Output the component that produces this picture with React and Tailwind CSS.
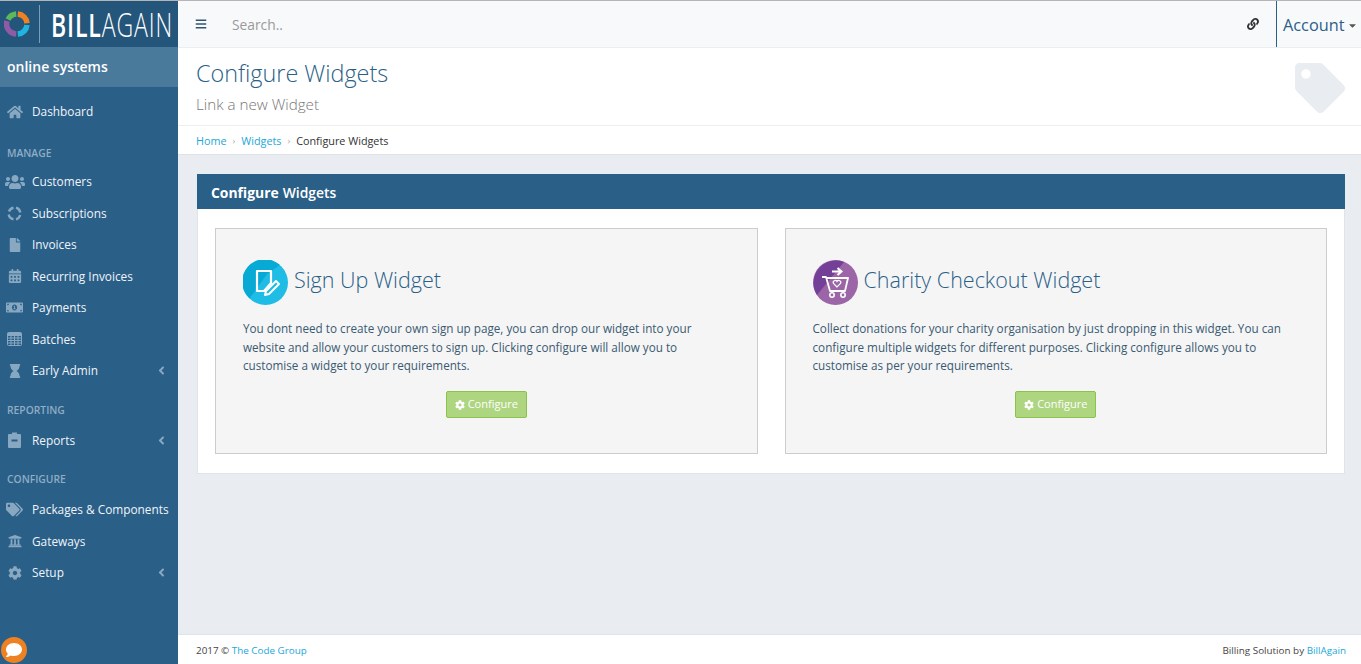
import React from "react";
import { FaHome, FaUsers, FaFile, FaCalendarAlt, FaMoneyBillAlt, FaHourglass, FaTags, FaUniversity, FaCog, FaAngleLeft, FaLink, FaBars, FaTag, FaComment, FaCaretDown } from "react-icons/fa";

const Ring = () => (
  <svg width="26" height="26" viewBox="0 0 26 26" fill="none" strokeWidth="5.5" className="shrink-0">
    <path d="M4 8.5 A10 10 0 0 1 12.2 3" stroke="#5cb85c" />
    <path d="M13.8 3 A10 10 0 0 1 23 12.2" stroke="#ee8122" />
    <path d="M23 14 A10 10 0 0 1 13.8 23" stroke="#22b4e0" />
    <path d="M12.2 23 A10 10 0 0 1 3 10" stroke="#8e5ba6" />
  </svg>
);

const CycleIcon = () => (
  <svg width="15" height="15" viewBox="0 0 15 15" fill="none" stroke="currentColor" strokeWidth="2.4">
    <path d="M2 5.5 A6 6 0 0 1 6.5 1.7" />
    <path d="M9 1.7 A6 6 0 0 1 13.3 6.5" />
    <path d="M13.2 9 A6 6 0 0 1 9 13.3" />
    <path d="M6.5 13.3 A6 6 0 0 1 1.7 8.5" />
  </svg>
);

const GridIcon = () => (
  <svg width="15" height="14" viewBox="0 0 15 14" fill="none" stroke="currentColor" strokeWidth="1">
    <rect x="0.5" y="0.5" width="14" height="13" rx="1" />
    <path d="M0.5 1.5 H14.5 M0.5 2.5 H14.5 M0.5 3.5 H14.5 M0.5 6 H14.5 M0.5 8.5 H14.5 M0.5 11 H14.5 M4 3.5 V13.5 M7.5 3.5 V13.5 M11 3.5 V13.5" />
  </svg>
);

const ClipIcon = () => (
  <svg width="13" height="16" viewBox="0 0 13 16">
    <path fillRule="evenodd" fill="currentColor" d="M1 2 H4 V0.5 H9 V2 H12 A1 1 0 0 1 13 3 V15 A1 1 0 0 1 12 16 H1 A1 1 0 0 1 0 15 V3 A1 1 0 0 1 1 2 Z M3.5 7.5 V9.5 H9.5 V7.5 Z" />
  </svg>
);

function NavItem({ icon: Icon, label, caret, size = 14 }) {
  return (
    <div className="flex items-center h-[31.5px] relative text-[11.85px] text-[#f0f4f8]">
      <span className="w-[32px] flex justify-center pr-[3px] text-[#87a8c0] shrink-0">
        <Icon size={size} />
      </span>
      <span className="whitespace-nowrap">{label}</span>
      {caret && <FaAngleLeft size={13} className="absolute right-[10px] text-[#87a8c0]" />}
    </div>
  );
}

const Heading = ({ children, className = "" }) => (
  <div className={`px-[7px] text-[10.3px] leading-[14px] font-semibold text-[#8fadc4] uppercase ${className}`}>{children}</div>
);

function Card({ icon, title, lines }) {
  return (
    <div className="flex-1 basis-0 min-w-0 h-[226px] bg-[#f5f5f5] border border-[#cccccc] pt-[31px] px-[27px]">
      <div className="flex items-center gap-[6px] h-[45px]">
        {icon}
        <span className="text-[21.5px] font-light text-[#2a5f88] whitespace-nowrap -mt-[5px]">{title}</span>
      </div>
      <div className="mt-[14px] text-[11.7px] leading-[18.5px] text-[#3a5a72]">
        {lines.map((l) => (
          <div key={l} className="whitespace-nowrap">{l}</div>
        ))}
      </div>
      <div className="flex justify-center mt-[16.5px]">
        <button className="flex items-center justify-center gap-[3px] w-[81px] h-[27px] bg-[#aed57f] border border-[#8bc34a] rounded-[2px] text-white text-[11px]">
          <FaCog size={10} />
          Configure
        </button>
      </div>
    </div>
  );
}

const SignIcon = (
  <svg width="45" height="45" viewBox="0 0 45 45" className="shrink-0">
    <circle cx="22.5" cy="22.5" r="22.5" fill="#1fbce6" />
    <path d="M6.5 38.5 A22.5 22.5 0 0 1 37 5 L24 14 Z" fill="#06aad4" />
    <path d="M14 11 H28 V23 L21 31 H14 Z" fill="none" stroke="#fff" strokeWidth="2.2" strokeLinejoin="round" />
    <path d="M23 31 L33 21 L36 24 L26 34 L22 35 Z" fill="none" stroke="#fff" strokeWidth="2" strokeLinejoin="round" />
  </svg>
);

const CartIcon = (
  <svg width="45" height="45" viewBox="0 0 45 45" className="shrink-0">
    <circle cx="22.5" cy="22.5" r="22.5" fill="#9b65a8" />
    <path d="M4 35 A22.5 22.5 0 0 1 31 2 Z" fill="#743f97" />
    <path d="M19 11.5 H28 M24.5 8 L28.5 11.5 L24.5 15" fill="none" stroke="#fff" strokeWidth="2" />
    <path d="M9 17 H13 L17 31 H32 L35 18 H13.5" fill="none" stroke="#fff" strokeWidth="1.8" strokeLinejoin="round" />
    <path d="M24 27 L20.5 23.5 A2 2 0 0 1 24 21.5 A2 2 0 0 1 27.5 23.5 Z" fill="none" stroke="#fff" strokeWidth="1.2" />
    <circle cx="19" cy="35" r="2.2" fill="none" stroke="#fff" strokeWidth="1.6" />
    <circle cx="30" cy="35" r="2.2" fill="none" stroke="#fff" strokeWidth="1.6" />
  </svg>
);

export default function App() {
  return (
    <div className="relative flex w-[1361px] h-[664px] overflow-hidden border-t border-[#b5b5b8] text-[#333] [font-family:'Open_Sans',sans-serif]">
      <aside className="w-[178px] shrink-0 bg-[#2a5f88] flex flex-col overflow-hidden">
        <div className="h-[46px] bg-[#24557a] flex items-center pl-[4px] shrink-0">
          <Ring />
          <div className="w-px h-[38px] bg-[#7d9db5] ml-[9px] mr-[11px] shrink-0" />
          <div className="shrink-0 origin-left scale-x-[0.7] whitespace-nowrap text-[33px] leading-none text-white tracking-[1.2px]">
            <span className="font-semibold">BILL</span>
            <span className="font-light">AGAIN</span>
          </div>
        </div>
        <div className="h-[40px] bg-[#4a7a9b] flex items-center px-[7px] pb-[2px] text-[14px] font-semibold text-white shrink-0">online systems</div>
        <div className="mt-[9px]">
          <NavItem icon={FaHome} label="Dashboard" size={16} />
        </div>
        <Heading className="mt-[18px] mb-[6.7px]">Manage</Heading>
        <NavItem icon={FaUsers} label="Customers" size={20} />
        <NavItem icon={CycleIcon} label="Subscriptions" />
        <NavItem icon={FaFile} label="Invoices" />
        <NavItem icon={FaCalendarAlt} label="Recurring Invoices" />
        <NavItem icon={FaMoneyBillAlt} label="Payments" size={17} />
        <NavItem icon={GridIcon} label="Batches" />
        <NavItem icon={FaHourglass} label="Early Admin" caret />
        <Heading className="mt-[16px] mb-[8px]">Reporting</Heading>
        <NavItem icon={ClipIcon} label="Reports" caret />
        <Heading className="mt-[16px] mb-[8px]">Configure</Heading>
        <NavItem icon={FaTags} label="Packages & Components" size={17} />
        <NavItem icon={FaUniversity} label="Gateways" />
        <NavItem icon={FaCog} label="Setup" caret />
      </aside>

      <main className="flex-1 min-w-0 flex flex-col bg-[#e9ecf1]">
        <header className="h-[47px] shrink-0 bg-[#f8f9fb] border-b border-[#eceef1] flex items-center">
          <FaBars size={12} className="ml-[17px] text-[#2f5572]" />
          <span className="ml-[25px] pt-[2px] text-[13.8px] text-[#9a9a9a]">Search..</span>
          <FaLink size={12} className="ml-auto mr-[17px] text-[#333]" />
          <div className="h-full w-[85px] border-l border-[#2a5f88] flex items-center pl-[6px] pt-[2px] text-[16.3px] text-[#2a5f88]">
            Account
            <FaCaretDown size={11} className="ml-[3px] text-[#555]" />
          </div>
        </header>
        <section className="h-[78px] shrink-0 bg-white border-b border-[#eceef1] flex justify-between pl-[18px] pr-[16px]">
          <div>
            <div className="mt-[10px] text-[23.4px] leading-[30px] font-light text-[#2a5f88]">Configure Widgets</div>
            <div className="mt-[6px] text-[15.2px] leading-[20px] font-light text-[#777]">Link a new Widget</div>
          </div>
          <FaTag size={50} className="mt-[15px] text-[#e9ecf1]" />
        </section>
        <nav className="h-[29px] shrink-0 bg-white border-b border-[#dfe3e8] flex items-center pl-[18px] pt-[2px] text-[10.8px] text-[#333] gap-[6px]">
          <span className="text-[#22a7d8]">Home</span>
          <span className="text-[#aaa] text-[9px]">›</span>
          <span className="text-[#22a7d8]">Widgets</span>
          <span className="text-[#aaa] text-[9px]">›</span>
          <span>Configure Widgets</span>
        </nav>
        <div className="flex-1 min-h-0 px-[16px] pt-[19px] pl-[19px]">
          <div className="h-[300px] bg-white border border-[#e0e3e8] border-t-0">
            <div className="h-[35px] -mx-px bg-[#2a5f88] flex items-center pl-[14px] pt-[3px] text-[13.9px] text-white">
              <span className="font-bold">Configure</span>
              <span className="ml-[4px] font-semibold">Widgets</span>
            </div>
            <div className="flex gap-[27px] pt-[19px] px-[17px]">
              <Card
                icon={SignIcon}
                title="Sign Up Widget"
                lines={[
                  "You dont need to create your own sign up page, you can drop our widget into your",
                  "website and allow your customers to sign up. Clicking configure will allow you to",
                  "customise a widget to your requirements.",
                ]}
              />
              <Card
                icon={CartIcon}
                title="Charity Checkout Widget"
                lines={[
                  "Collect donations for your charity organisation by just dropping in this widget. You can",
                  "configure multiple widgets for different purposes. Clicking configure allows you to",
                  "customise as per your requirements.",
                ]}
              />
            </div>
          </div>
        </div>
        <footer className="h-[30px] shrink-0 bg-white border-t border-[#e0e3e8] flex items-center justify-between pl-[18px] pr-[15px] pt-[2px] text-[9.85px] text-[#444]">
          <span>
            2017 © <span className="text-[#22a7d8]">The Code Group</span>
          </span>
          <span>
            Billing Solution by <span className="text-[#22a7d8]">BillAgain</span>
          </span>
        </footer>
      </main>

      <div className="absolute left-px top-[636px] w-[26px] h-[26px] rounded-full bg-[#ee8122] flex items-center justify-center text-white">
        <FaComment size={16} />
      </div>
    </div>
  );
}
